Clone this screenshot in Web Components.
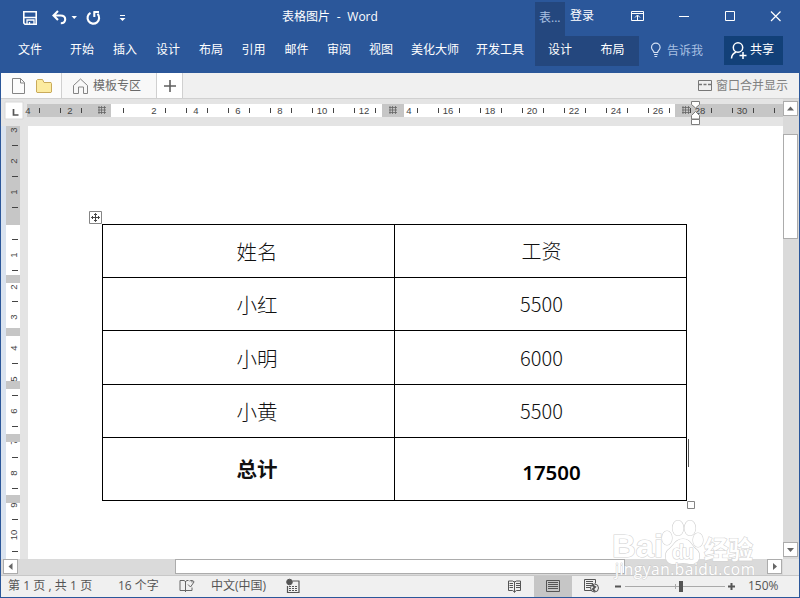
<!DOCTYPE html>
<html lang="zh-CN">
<head>
<meta charset="utf-8">
<title>表格图片 - Word</title>
<style>
html,body{margin:0;height:100%;overflow:hidden}
body{font:12px/16px "Open Sans","Noto Sans CJK SC",sans-serif;width:800px;height:598px}
</style>
</head>
<body>
<word-window></word-window>
<script>
const define = (name, html, setup) => customElements.define(name, class extends HTMLElement {
  constructor() {
    super();
    const t = document.createElement('template');
    t.innerHTML = html;
    this.attachShadow({mode: 'open'}).append(t.content.cloneNode(true));
  }
  connectedCallback() { if (setup) setup(this, this.shadowRoot); }
});

define('title-bar', `
<style>
:host{display:flex;height:36px;color:#fff;background:#2b579a;position:relative}
.quick{width:282px;flex:none}
.name{width:253px;line-height:33px;white-space:pre;word-spacing:3.6px}
.ctx{width:30px;background:#24477e;color:#a9c0e2;margin-top:2px;line-height:31px;text-indent:4px;white-space:nowrap}
.login{width:56px;line-height:32px;padding-left:5px}
svg{display:block}
</style>
<svg class="quick" width="282" height="36" fill="none" stroke="#fff">
  <path d="M23.8 11.8h12.4v12.4H25l-1.2-1.2z" stroke-width="1.6"/><path d="M24 17.5h12" stroke-width="1.5"/><path d="M27 24v-4h7v4M29.5 24v-2" stroke-width="1.3"/>
  <path d="M58 11l-4.5 4.5 4.5 4.5M54 15.5h6.5c3 0 4.7 1.5 4.7 3.8s-1.700 4-4.400 4" stroke-width="2.100"/>
  <path d="M71.500 16h5.500l-2.750 3z" fill="#fff" stroke="none"/>
  <path d="M90.500 12.800a5.800 5.800 0 1 0 7 1M93.500 12h5.500M94.300 11.500v5.500" stroke-width="2.100"/>
  <path d="M120 15.500h5" /><path d="M119.500 18h6l-3 3z" fill="#fff" stroke="none"/>
</svg>
<div class="name">表格图片 - Word</div>
<div class="ctx">表...</div>
<div class="login">登录</div>
<svg width="174" height="36" fill="none" stroke="#fff">
  <path d="M5.500 11.500h12v9h-12zM5.500 13.500h12M11.500 20v-4.500M9 17.500l2.500-2.500 2.500 2.500"/>
  <path d="M53 16.500h10M99.500 11.500h9v9h-9z"/><path d="M145 11.500l9.500 9.500M154.500 11.500l-9.500 9.500" stroke-width="1.200"/>
</svg>`);

define('ribbon-tab', `<style>:host{display:block;flex:none;text-align:center;line-height:27px;white-space:nowrap}</style><slot></slot>`,
  el => el.style.width = el.getAttribute('w') + 'px');

define('ribbon-tabs', `
<style>
:host{display:flex;height:37px;background:#2b579a;color:#fff}
.context{display:flex;margin-left:3px;background:#24477e;height:30px;width:104px}
.tell{display:flex;width:75px;padding-left:10px;line-height:29px;color:#a9c0e2}
.share{display:flex;width:59px;height:29px;background:#124078;line-height:27px}
svg{flex:none}
</style>
<ribbon-tab w="60">文件</ribbon-tab><ribbon-tab w="44">开始</ribbon-tab><ribbon-tab w="42">插入</ribbon-tab><ribbon-tab w="44">设计</ribbon-tab><ribbon-tab w="42">布局</ribbon-tab><ribbon-tab w="43">引用</ribbon-tab><ribbon-tab w="43">邮件</ribbon-tab><ribbon-tab w="42">审阅</ribbon-tab><ribbon-tab w="42">视图</ribbon-tab><ribbon-tab w="66">美化大师</ribbon-tab><ribbon-tab w="64">开发工具</ribbon-tab>
<div class="context"><ribbon-tab w="50">设计</ribbon-tab><ribbon-tab w="55">布局</ribbon-tab></div>
<div class="tell"><svg width="18" height="29" fill="none" stroke="#d5e1f3" stroke-width="1.200"><path d="M5 16.500c0-2-2.500-2.500-2.500-5a4.300 4.300 0 0 1 8.600 0c0 2.500-2.500 3-2.500 5zM5 18.500h3.700M5.500 20.500h2.700"/></svg>告诉我</div>
<div class="share"><svg width="26" height="29" fill="none" stroke="#fff" stroke-width="1.500"><circle cx="14" cy="11.500" r="4.700"/><path d="M7.500 22.500c.2-3.500 2-5.500 4.700-6.500M15.500 19.500h7M19 16v7"/></svg>共享</div>`);

define('file-tabs', `
<style>
:host{display:flex;height:25px;background:#f0f0f0;border-bottom:1px solid #d0d0d0;color:#6a6a6a;line-height:25px}
.left{width:60px;border-right:1px solid #d0d0d0;background:#fcfcfc}
.tab{display:flex;width:94px;background:#f8f8f8;border-right:1px solid #d0d0d0}
.add{width:25px;background:#fff;border-right:1px solid #d0d0d0}
.show{display:flex;margin-left:auto;width:101px;color:#808080}
svg{display:block;flex:none}
</style>
<div class="left"><svg width="60" height="25" fill="none" stroke="#858585"><path d="M11.500 5.500h8l4 4v11h-12zM19.500 5.500v4.500h4"/><path d="M35.500 19V7.500l1-1h5l1.500 3h7l.5 1V19l-.5.500h-14z" fill="#fcebA0" stroke="#c9aa5b"/></svg></div>
<div class="tab"><svg width="31" height="25" fill="none" stroke="#858585"><path d="M11.500 20.500v-8l7-6.500 7 6.500v8h-4v-6.500h-5v6.500z"/></svg>模板专区</div>
<div class="add"><svg width="25" height="25" stroke="#606060" stroke-width="1.600"><path d="M7 13h12M13 7v12"/></svg></div>
<div class="show"><svg width="18" height="25" fill="none" stroke="#777"><path d="M.5 7.500h13v10h-13z"/><path d="M1 11.500h12" stroke-dasharray="3 1.500" stroke-width="1.500"/></svg>窗口合并显示</div>`);

const grid = (x, y) => `<path d="M${x} ${y+.5}h8M${x} ${y+3}h8M${x} ${y+5.500}h8M${x+1} ${y-1}v8M${x+3.500} ${y-1}v8M${x+6.500} ${y-1}v8" stroke="#666" stroke-width=".8"/>`;

define('horizontal-ruler', `
<style>:host{display:block;height:27px;background:#e4e4e4}svg{display:block;overflow:visible;font:9.500px "Liberation Sans",sans-serif}</style><svg width="782" height="27"></svg>`,
(el, root) => {
  let s = '<path d="M4 3h18v17H4z" fill="#fff" stroke="#d8d8d8"/><path d="M12.500 10v6h5" fill="none" stroke="#555" stroke-width="1.700"/><path d="M26 5h756v13H26z" fill="#c6c6c6"/><path d="M110 5h271v13H110zM403 5h271v13H403z" fill="#fff"/>';
  for (let i = 0; i < 36; i++) {
    const x = Math.round(37.500 + i * 21);
    if (![4, 5].includes(i) || i === 4) if (x !== 101 && x !== 394 && x !== 395 && Math.abs(x - 100.500) > 2) s += `<path d="M${x + .5 - (x>690?0:0)} 9v5" stroke="#444"/>`;
  }
  const labels = [[27,4],[69,2]];
  for (let n = 2; n <= 30; n += 2) if (n !== 14) labels.push([153 + (n - 2) * 21, n]);
  labels.push([408, 4]);
  for (const [x, n] of labels) s += `<text x="${x}" y="15" text-anchor="middle" fill="#444">${n}</text>`;
  s += grid(97, 8) + grid(388, 8) + grid(681, 8);
  s += '<path d="M690.500 2.500h8v3l-4 3.500-4-3.500zM690.500 20v-3.500l4-4 4 4v3.500zM690.500 20.500h8v5h-8z" fill="#fff" stroke="#7d7d7d"/>';
  root.querySelector('svg').innerHTML = s;
});

define('vertical-ruler', `
<style>:host{display:block;width:27px;background:#e4e4e4}svg{display:block;font:9.500px "Liberation Sans",sans-serif}</style><svg width="27" height="433"></svg>`,
(el, root) => {
  let s = '<path d="M0 0h5v433H0z" fill="#dae3ef"/><path d="M5 0h14v433H5z" fill="#fff"/>';
  [[130,3],[161,2],[192,1],[255,1],[287,2],[317,3],[348,4],[379,5],[411,6],[442,7],[473,8],[505,9],[535,10]]
    .forEach(([y, n]) => s += `<text transform="translate(15.500 ${y - 126}) rotate(-90)" text-anchor="middle" fill="#444">${n}</text>`);
  s = s.replace('<text', '<path d="M5 0h14v99H5z" fill="#c6c6c6"/><text');
  [145,176,207,239,270,301,363,395,426,457,488,519,551].forEach(y => s += `<path d="M11 ${y - 125.500}h6" stroke="#444"/>`);
  [[275,8],[328,8],[381,8],[434,8],[495,8]].forEach(([y, h]) => s += `<path d="M5 ${y - 126}h14v${h}H5z" fill="#c6c6c6"/>`);
  root.querySelector('svg').innerHTML = s;
});

define('salary-table', `
<style>
:host{display:grid;grid-template-columns:291px 291px;grid-template-rows:52px 52px 53px 52px 62px;gap:1px;width:583px;padding:1px;background:#000;box-sizing:content-box;font:300 20px/30px "Noto Sans CJK SC",sans-serif;color:#111}
div{background:#fff;display:flex;align-items:center;justify-content:center}
.cn{font-size:20.500px;padding-right:0;padding-left:18px;padding-right:0}
.num{padding-left:2px}
.b{font-weight:600;color:#000}
.t{font:600 20.500px/30px "Noto Sans","Open Sans",sans-serif;padding:6px 0 0 22px}
.tc{font-weight:700;padding-bottom:2px}
div.cn{padding-left:17px}
</style>
<div class="cn">姓名</div><div class="num w">工资</div>
<div class="cn">小红</div><div class="num">5500</div>
<div class="cn">小明</div><div class="num">6000</div>
<div class="cn">小黄</div><div class="num">5500</div>
<div class="cn tc">总计</div><div class="t b">17500</div>`);

define('scroll-arrow', `<style>:host{display:block;width:13px;height:13px;border:1px solid #acacac;background:#fff}svg{display:block}</style><svg width="13" height="13" fill="#666"><path/></svg>`,
(el, root) => root.querySelector('path').setAttribute('d', {up:'M3 8.500l3.500-4 3.500 4z',down:'M3 5h7l-3.500 4z',left:'M8.500 3v7l-4-3.500z',right:'M5 3l4 3.500-4 3.500z'}[el.getAttribute('to')]));

define('vertical-scroll', `
<style>:host{display:flex;flex-direction:column;width:16px;background:#dadada}
.thumb{height:103px;width:13px;border:1px solid #acacac;background:#fff;margin:18px 0 auto}scroll-arrow{flex:none}scroll-arrow:last-child{margin-bottom:2px}scroll-arrow:first-of-type{margin-top:2px}</style>
<scroll-arrow to="up"></scroll-arrow><div class="thumb"></div><scroll-arrow to="down"></scroll-arrow>`);

define('horizontal-scroll', `
<style>:host{display:flex;height:16px;background:#dadada;width:798px}
.thumb{height:13px;width:448px;border:1px solid #acacac;background:#fff;margin-left:157px}scroll-arrow{flex:none;margin-left:2px}scroll-arrow:last-of-type{margin-left:142px}i{width:16px;background:#e6e6e6;margin-left:auto}</style>
<scroll-arrow to="left"></scroll-arrow><div class="thumb"></div><scroll-arrow to="right"></scroll-arrow><i></i>`);

define('page-watermark', `
<style>:host{display:block;position:absolute;left:610px;top:508px}svg{display:block}</style>
<svg width="160" height="76">
 <g fill="#fff" stroke="#d2d2d2" stroke-width="1.200" paint-order="stroke">
  <text x="2" y="49" font-family="Liberation Sans" font-weight="700" font-size="32" textLength="51" lengthAdjust="spacingAndGlyphs">Bai</text>
  <ellipse cx="57" cy="30" rx="5" ry="7"/><ellipse cx="68" cy="20" rx="5.500" ry="7.500"/><ellipse cx="80" cy="20" rx="5.500" ry="7.500"/><ellipse cx="88" cy="32" rx="5" ry="7"/>
  <path d="M73 31c8 0 8 7 14 11 4 4 3 13-4 14-4 .5-6-1-10-1s-7 1.500-11 1c-7-1-8-10-4-14 6-4 7-11 15-11z"/>
  <text x="62" y="51" font-family="Liberation Sans" font-weight="700" font-size="20" textLength="22">du</text>
  <text x="94" y="51" font-family="Noto Sans CJK SC" font-weight="700" font-size="25" textLength="49" lengthAdjust="spacingAndGlyphs">经验</text>
 </g>
 <text x="5" y="67" font-family="Open Sans" font-size="15.500" textLength="140" fill="#fff" stroke="#c8c8c8" stroke-width=".8" paint-order="stroke">jingyan.baidu.com</text>
</svg>`);

define('document-view', `
<style>
:host{display:flex;height:433px;background:#fff}
.page{width:755px;position:relative}
salary-table{margin:98px 0 0 74px}
svg{position:absolute;left:0;top:0;pointer-events:none}
</style>
<vertical-ruler></vertical-ruler>
<div class="page"><salary-table></salary-table>
<svg width="755" height="433" fill="#fff" stroke="#858585"><path d="M61.500 85.500h12v12h-12z"/><path d="M67.500 87.500v8M63.500 91.500h8M66 89l1.500-1.500 1.500 1.500M66 94l1.500 1.500 1.500-1.500M65 90l-1.500 1.500 1.500 1.500M70 90l1.500 1.500-1.500 1.500" stroke="#444" fill="none"/><path d="M660.500 313v28" stroke="#555"/><path d="M659.500 375.500h7v7h-7z"/></svg></div>`);

define('status-bar', `
<style>
:host{display:flex;height:21px;border-top:1px solid #c8c8c8;background:#f0f0f0;color:#555;line-height:20px;white-space:nowrap}
.page{width:110px;padding-left:7px;word-spacing:.1px}.words{width:60px}.lang{width:72px}.views{margin-left:auto}.zoom{width:51px}
svg{display:block;flex:none}
</style>
<div class="page">第 1 页 , 共 1 页</div><div class="words">16 个字</div>
<svg width="33" height="21" fill="none" stroke="#666"><path d="M7.500 14.500h-5.500v-10h4l1.500 1 1.500-1h1.500M7.500 5v11M8 14.500h6v-3M14 4.500v2M10 8.500l2.500 2.500 3.500-5c0-1.500-3-2-4.500-1"/></svg>
<div class="lang">中文(中国)</div>
<svg width="20" height="21" fill="none" stroke="#555"><circle cx="6.500" cy="6" r="2.800" fill="#555"/><path d="M9.500 5h7M4.500 10v6.500h11.500V5" stroke-width="1.200"/><path d="M6 10.500h9M6 12.500h9M6 14.500h9" stroke-dasharray="2 1"/></svg>
<svg class="views" width="247" height="21" fill="none" stroke="#555">
 <path d="M33 0h38v21H33z" fill="#c6c6c6" stroke="none"/>
 <path d="M13.500 5.500v11M7.500 5h4l2 1 2-1h4v9.500h-4l-2 1.500-2-1.500h-4z"/><path d="M8.500 7.500h3.500M8.500 9.500h3.500M8.500 11.500h3.500M15 7.500h4M15 9.500h4M15 11.500h4"/>
 <path d="M45.500 4.500h13v11h-13zM47 6.500h10M47 8.500h10M47 10.500h10M47 12.500h10"/>
 <path d="M90.500 14.500h-7v-11h11v4M85 5.500h7M85 7.500h7M85 9.500h5M85 11.500h4"/><circle cx="93.500" cy="12" r="4"/><path d="M91 9l3 2-2 2 2 2.500" stroke-width="2"/>
 <path d="M114 10.500h6" stroke-width="2"/><path d="M124 10.500h100" stroke="#aaa"/><path d="M174.500 8v5" stroke="#aaa"/><path d="M178 5h4v11h-4z" fill="#555" stroke="none"/><path d="M227 10.500h7M230.500 7v7" stroke-width="2"/>
</svg><div class="zoom">150%</div>`);

define('word-window', `
<style>
:host{display:flex;flex-direction:column;box-sizing:border-box;width:800px;height:598px;background:#2b579a;padding-bottom:1px;position:relative}
.body{display:flex;flex-direction:column;margin:0 1px;width:798px;background:#f0f0f0;height:524px}
.work{display:flex;height:460px}.doc{width:782px}
</style>
<title-bar></title-bar><ribbon-tabs></ribbon-tabs>
<div class="body"><file-tabs></file-tabs>
<div class="work"><div class="doc"><horizontal-ruler></horizontal-ruler><document-view></document-view></div><vertical-scroll></vertical-scroll></div>
<horizontal-scroll></horizontal-scroll><status-bar></status-bar></div>
<page-watermark></page-watermark>`);
</script>
</body>
</html>
